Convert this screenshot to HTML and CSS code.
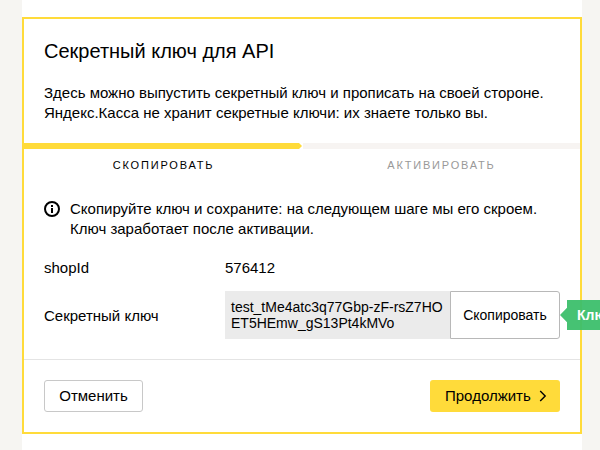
FILE: index.html
```html
<!DOCTYPE html>
<html lang="ru">
<head>
<meta charset="utf-8">
<title>Секретный ключ для API</title>
<link rel="stylesheet" href="styles.css">
</head>
<body>
<main class="page">
  <section class="card">
    <header class="intro">
      <h1 class="title">Секретный ключ для API</h1>
      <p class="text">Здесь можно выпустить секретный ключ и прописать на своей стороне.<br>Яндекс.Касса не хранит секретные ключи: их знаете только вы.</p>
    </header>
    <div class="progress"><div class="progress-fill"></div></div>
    <div class="steps">
      <span class="step">Скопировать</span>
      <span class="step step-next">Активировать</span>
    </div>
    <div class="content">
      <div class="notice">
        <svg class="info" viewBox="0 0 16 16" width="16" height="16">
          <circle cx="8" cy="8" r="7" fill="none" stroke="#000" stroke-width="2"/>
          <path d="M7 4h2v2H7zM7 7h2v5H7z" fill="#000"/>
        </svg>
        <p class="text">Скопируйте ключ и сохраните: на следующем шаге мы его скроем.<br>Ключ заработает после активации.</p>
      </div>
      <div class="row row-shop">
        <span class="label">shopId</span>
        <span>576412</span>
      </div>
      <div class="row row-key">
        <span class="label label-key">Секретный ключ</span>
        <div class="key">test_tMe4atc3q77Gbp-zF-rsZ7HO<br>ET5HEmw_gS13Pt4kMVo</div>
        <button class="copy" type="button">Скопировать</button>
        <div class="tooltip">Клю</div>
      </div>
    </div>
    <footer class="actions">
      <button class="button" type="button">Отменить</button>
      <button class="button button-primary" type="button">Продолжить
        <svg class="chevron" viewBox="0 0 8 12" width="8" height="12"><path d="M1.2 1l5 5-5 5" fill="none" stroke="#000" stroke-width="1.4"/></svg>
      </button>
    </footer>
  </section>
</main>
</body>
</html>
```

FILE: styles.css
```css
* { box-sizing: border-box; }
body {
  margin: 0;
  height: 450px;
  overflow: hidden;
  background: #f6f5f2;
  color: #000;
  font: 15px/20px "Liberation Sans", Arial, sans-serif;
}
.page {
  width: 560px;
  height: 450px;
  margin-left: 22px;
  padding-top: 17px;
  background: #fff;
}
.card {
  height: 417px;
  border: 2px solid #ffdb3a;
}
.intro { padding: 20px 20px 0; height: 124px; }
.title { margin: 0 0 20px; font-size: 20px; line-height: 24px; font-weight: 400; }
.text { margin: 0; white-space: nowrap; }
.progress {
  height: 6px;
  background: linear-gradient(90deg, #fff 279px, #f7f4f2 279px);
}
.progress-fill {
  width: 278px;
  height: 6px;
  background: #ffdb3a;
  clip-path: polygon(0 0, 275px 0, 100% 50%, 275px 100%, 0 100%);
}
.steps { display: flex; height: 50px; padding-top: 6px; }
.step {
  flex: 1;
  padding-left: 1px;
  text-align: center;
  font-size: 11px;
  letter-spacing: 1.8px;
  text-transform: uppercase;
}
.step-next { color: #999; }
.content { padding: 0 20px; height: 160px; }
.notice { display: flex; gap: 10px; height: 59px; }
.info { margin-top: 2px; flex: none; }
.row { display: flex; }
.row-shop { height: 33px; }
.label { width: 181px; flex: none; }
.label-key { padding-top: 2px; }
.row-key { position: relative; height: 48px; align-items: center; }
.key {
  width: 225px;
  height: 48px;
  padding: 8px 0 0 6px;
  background: #ebebeb;
  font-size: 14px;
  line-height: 16px;
  white-space: nowrap;
}
.copy {
  width: 110px;
  height: 48px;
  padding: 0;
  border: 1px solid #b8b8b8;
  border-radius: 0 3px 3px 0;
  background: #fff;
  color: #000;
  font: 14px/20px "Liberation Sans", Arial, sans-serif;
}
.tooltip {
  position: absolute;
  left: 516px;
  top: 9px;
  width: 40px;
  height: 30px;
  padding-left: 17px;
  overflow: hidden;
  background: rgba(60, 191, 108, 0.95);
  clip-path: polygon(0 50%, 7px 26%, 7px 0, 100% 0, 100% 100%, 7px 100%, 7px 74%);
  color: #fff;
  font-size: 14px;
  font-weight: 700;
  line-height: 30px;
  white-space: nowrap;
}
.actions {
  display: flex;
  justify-content: space-between;
  padding: 20px 20px 0;
  border-top: 1px solid #e4e4e4;
}
.button {
  width: 99px;
  height: 32px;
  padding: 0;
  border: 1px solid #c8c8c8;
  border-radius: 3px;
  background: #fff;
  color: #000;
  font: 15px/20px "Liberation Sans", Arial, sans-serif;
}
.button-primary {
  display: flex;
  align-items: center;
  width: 130px;
  padding-left: 15px;
  gap: 8px;
  border: 0;
  background: #ffdb3a;
}
```
